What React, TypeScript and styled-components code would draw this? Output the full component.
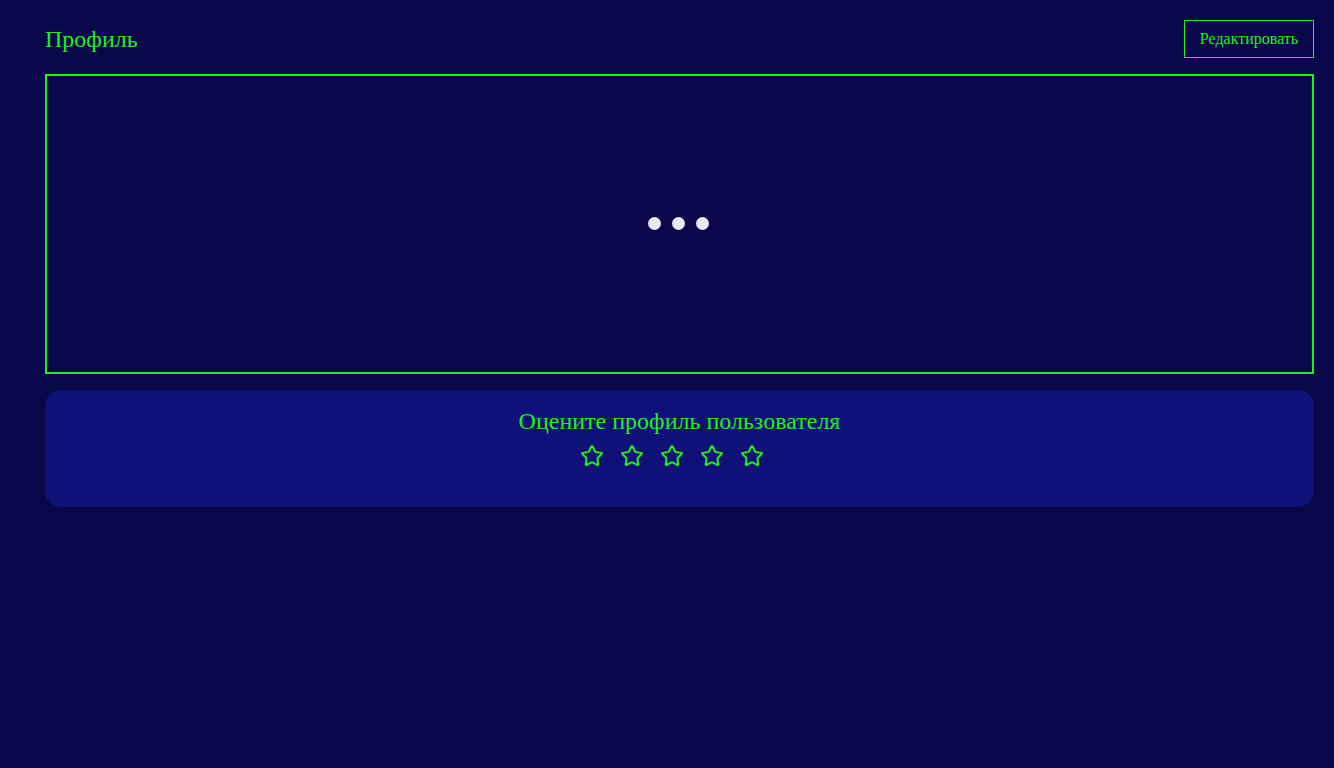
import React, { FC } from 'react';
import styled, { createGlobalStyle } from 'styled-components';
import { Star } from 'lucide-react';

const green = '#1cf01c';

const GlobalStyle = createGlobalStyle`
  html, body {
    margin: 0;
    padding: 0;
    background: #09074a;
    font-family: 'Liberation Serif', 'Times New Roman', serif;
  }
`;

const Page = styled.div`
  min-height: 768px;
  padding: 20px 20px 0 45px;
  box-sizing: border-box;
  display: flex;
  flex-direction: column;
`;

const Header = styled.div`
  display: flex;
  align-items: center;
  justify-content: space-between;
  height: 38px;
`;

const Title = styled.h1`
  margin: 0;
  font-size: 24px;
  font-weight: normal;
  color: ${green};
`;

const EditButton = styled.button`
  height: 38px;
  width: 130px;
  border: 1px solid ${green};
  background: transparent;
  color: ${green};
  font-family: 'Liberation Serif', serif;
  font-size: 16px;
  padding: 0;
  cursor: pointer;
`;

const Preview = styled.div`
  margin-top: 16px;
  height: 300px;
  border: 2px solid ${green};
  box-sizing: border-box;
  padding-bottom: 2px;
  display: flex;
  align-items: center;
  justify-content: center;
  gap: 11px;
`;

const Dot = styled.span`
  width: 13px;
  height: 13px;
  border-radius: 50%;
  background: #e9e8f2;

  &:last-child {
    margin-right: 2px;
  }
`;

const RatingCard = styled.div`
  margin-top: 16px;
  height: 117px;
  box-sizing: border-box;
  padding-top: 16px;
  border-radius: 16px;
  background: #0e1177;
  display: flex;
  flex-direction: column;
  align-items: center;
`;

const RatingTitle = styled.div`
  font-size: 24px;
  line-height: 30px;
  color: ${green};
`;

const Stars = styled.div`
  margin-top: 8px;
  display: flex;
  color: ${green};

  svg {
    margin-right: 16px;
  }
`;

const App: FC = () => (
  <Page>
    <GlobalStyle />
    <Header>
      <Title>Профиль</Title>
      <EditButton>Редактировать</EditButton>
    </Header>
    <Preview>
      <Dot />
      <Dot />
      <Dot />
    </Preview>
    <RatingCard>
      <RatingTitle>Оцените профиль пользователя</RatingTitle>
      <Stars>
        {[1, 2, 3, 4, 5].map((n) => (
          <Star key={n} size={24} strokeWidth={2} />
        ))}
      </Stars>
    </RatingCard>
  </Page>
);

export default App;
